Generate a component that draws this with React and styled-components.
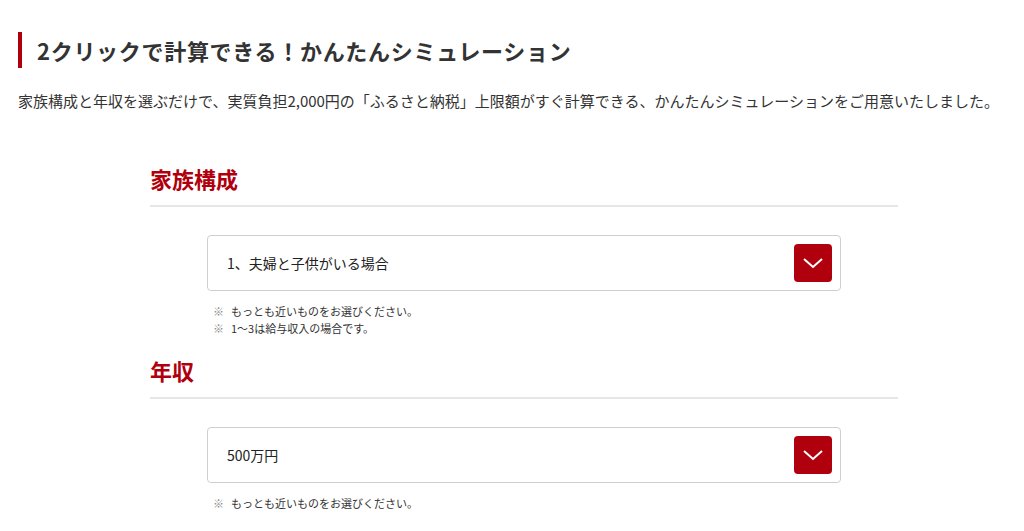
import React from "react";
import styled, { createGlobalStyle } from "styled-components";

const Global = createGlobalStyle`
	body {
		margin: 0;
		background: #fff;
		font-family: "Noto Sans CJK JP", "Noto Sans", sans-serif;
		color: #333;
	}
`;

const Page = styled.div`
	padding: 32px 18px 0 18px;
`;

const Title = styled.h1`
	margin: 0;
	border-left: 4px solid #b0000d;
	padding-left: 15px;
	height: 36px;
	display: flex;
	align-items: center;
	font-size: 22px;
	font-weight: bold;
	color: #333;
	letter-spacing: 0.7px;
`;

const Lead = styled.p`
	margin: 21px 0 0 0;
	font-size: 15px;
	line-height: 24px;
	color: #333;
`;

const Sim = styled.div`
	width: 748px;
	margin: 51px 0 0 132px;
`;

const Section = styled.section`
	margin-bottom: 19px;
`;

const Heading = styled.h2`
	margin: 0;
	padding-bottom: 13px;
	border-bottom: 2px solid #e6e6e6;
	font-size: 22px;
	line-height: 28px;
	font-weight: bold;
	color: #b0000d;
`;

const Field = styled.div`
	margin: 28px 57px 0 57px;
`;

const Select = styled.div`
	height: 54px;
	border: 1px solid #cfcfcf;
	border-radius: 4px;
	display: flex;
	align-items: center;
	justify-content: space-between;
	padding: 0 8px 0 19px;
	font-size: 14px;
	color: #222;
`;

const Arrow = styled.div`
	width: 38px;
	height: 38px;
	border-radius: 4px;
	background: #b0000d;
	display: flex;
	align-items: center;
	justify-content: center;
`;

const Notes = styled.ul`
	list-style: none;
	margin: 12px 0 0 6px;
	padding: 0;
`;

const Note = styled.li`
	font-size: 11px;
	line-height: 17px;
	color: #333;
	&::before {
		content: "※";
		color: #888;
		margin-right: 7px;
	}
`;

const Chevron = () => (
	<svg width="22" height="12" viewBox="0 0 22 12">
		<polyline points="2,2 11,10 20,2" fill="none" stroke="#fff" strokeWidth="2" />
	</svg>
);

function Choice({ title, value, notes }) {
	return (
		<Section>
			<Heading>{title}</Heading>
			<Field>
				<Select>
					<span>{value}</span>
					<Arrow>
						<Chevron />
					</Arrow>
				</Select>
				<Notes>
					{notes.map((n) => (
						<Note key={n}>{n}</Note>
					))}
				</Notes>
			</Field>
		</Section>
	);
}

export default function App() {
	return (
		<>
			<Global />
			<Page>
				<Title>2クリックで計算できる！かんたんシミュレーション</Title>
				<Lead>
					家族構成と年収を選ぶだけで、実質負担2,000円の「ふるさと納税」上限額がすぐ計算できる、かんたんシミュレーションをご用意いたしました。
				</Lead>
				<Sim>
					<Choice
						title="家族構成"
						value="1、夫婦と子供がいる場合"
						notes={["もっとも近いものをお選びください。", "1〜3は給与収入の場合です。"]}
					/>
					<Choice title="年収" value="500万円" notes={["もっとも近いものをお選びください。"]} />
				</Sim>
			</Page>
		</>
	);
}
